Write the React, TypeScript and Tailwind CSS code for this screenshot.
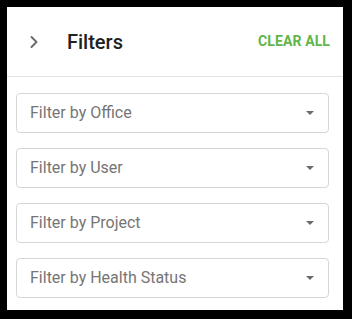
import { ChevronRight } from 'lucide-react';

const filters = ['Filter by Office', 'Filter by User', 'Filter by Project', 'Filter by Health Status'];

function FilterSelect({ label }: { label: string }) {
  return (
    <div className="h-10 flex items-center justify-between rounded border border-[#d6d6d6] pl-[13px] pr-[14px] bg-white">
      <span className="text-[16px] text-[#757575]">{label}</span>
      <svg width="8" height="4" viewBox="0 0 8 4">
        <path d="M0 0 L8 0 L4 4 Z" fill="#6b6b6b" />
      </svg>
    </div>
  );
}

export default function App() {
  return (
    <div
      className="w-[352px] h-[319px] bg-black pl-[7px] pt-[7px] pr-[9px] pb-[9px]"
      style={{ fontFamily: 'Roboto, "Noto Sans", sans-serif' }}
    >
      <div className="h-full bg-white flex flex-col">
        {/* Header */}
        <div className="h-[70px] flex items-center border-b border-[#e3e3e3] pl-[17px] pr-[13px]">
          <ChevronRight size={20} strokeWidth={2.3} className="text-[#6a6a6a]" />
          <h2 className="ml-[23px] text-[20px] font-medium text-[#212121]">Filters</h2>
          <button className="ml-auto text-[14px] font-bold tracking-[0.1px] text-[#62b54a]">CLEAR ALL</button>
        </div>

        {/* Selects */}
        <div className="flex flex-col gap-[15px] pt-4 pl-[9px] pr-[14px]">
          {filters.map((f) => (
            <FilterSelect key={f} label={f} />
          ))}
        </div>
      </div>
    </div>
  );
}
